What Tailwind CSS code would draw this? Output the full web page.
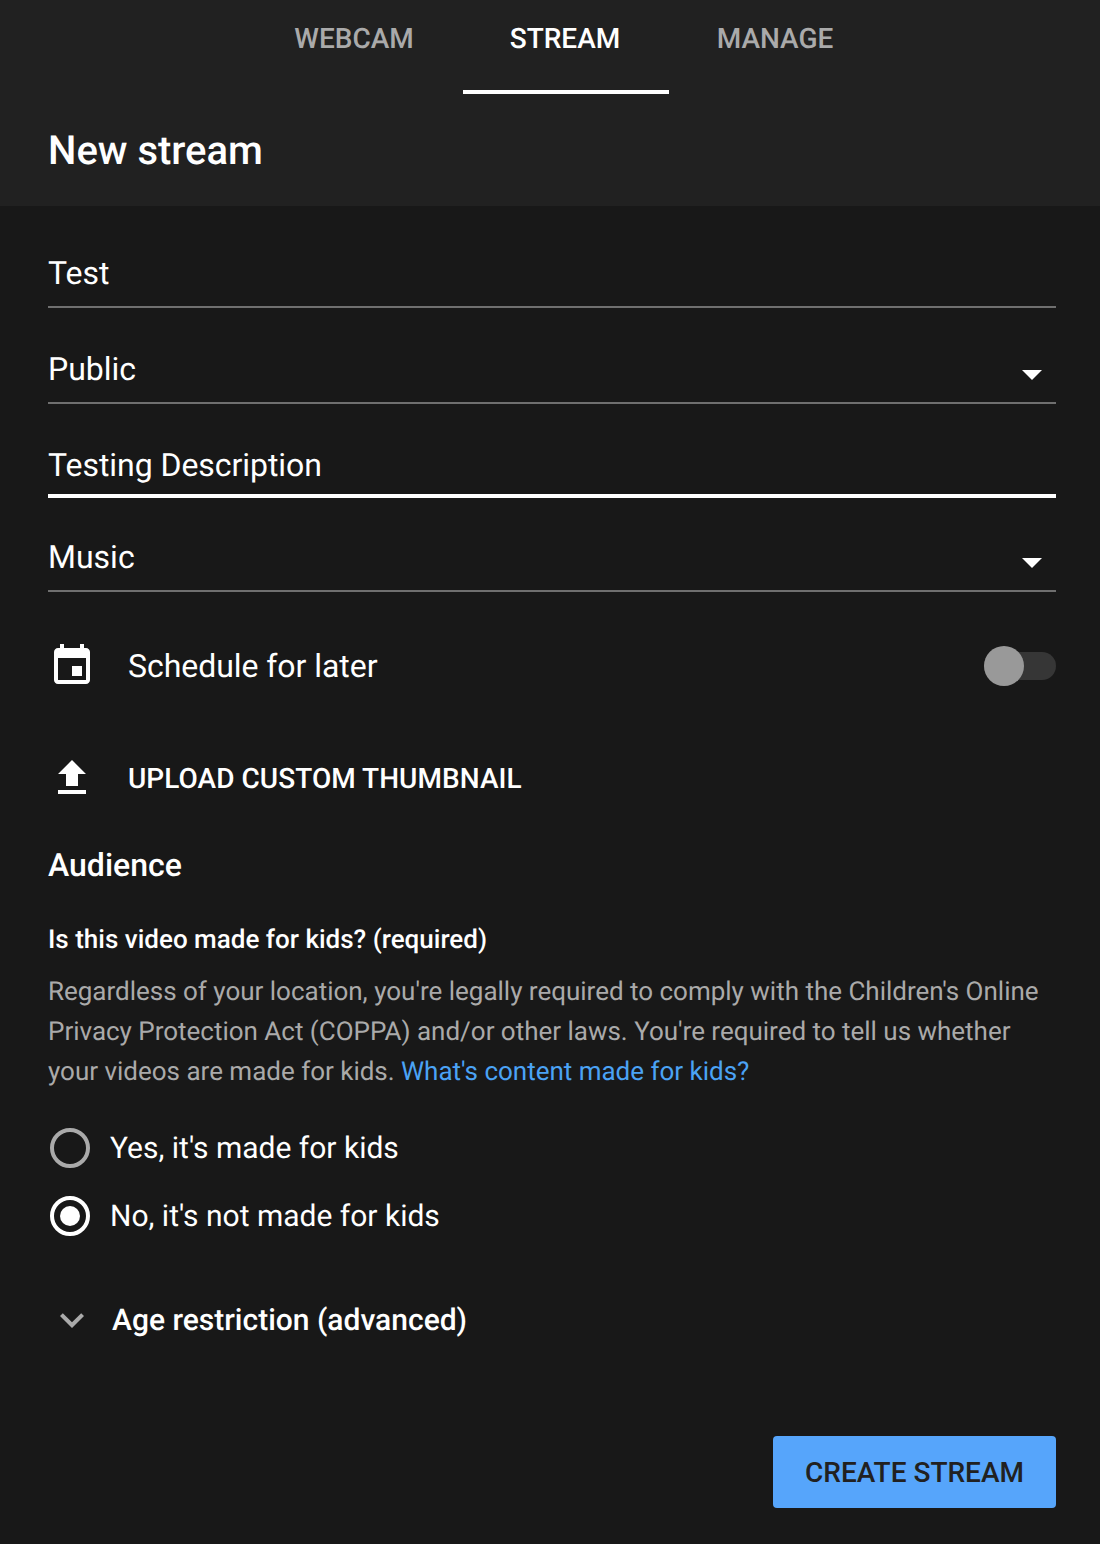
<!DOCTYPE html>
<html><head><meta charset="utf-8"><script src="https://cdn.jsdelivr.net/npm/@tailwindcss/browser@4"></script></head>
<body class="m-0 bg-[#181818]">
<div class="w-[1100px] h-[1544px] overflow-hidden bg-[#181818] text-white font-['Roboto',sans-serif] antialiased [text-rendering:geometricPrecision] flex flex-col">
  <header class="h-[206px] bg-[#212121] shrink-0">
    <nav class="flex h-[94px] pl-[247px] text-[28px] leading-[78px] font-medium">
      <div class="w-[214px] text-center text-[#aaaaaa]">WEBCAM</div>
      <div class="w-[206px] ml-[2px] pr-[2px] text-center border-b-4 border-white">STREAM</div>
      <div class="w-[212px] text-center text-[#aaaaaa]">MANAGE</div>
    </nav>
    <h1 class="pl-[48px] text-[40px] leading-[56px] font-medium h-[112px] pt-[29px] box-border">New stream</h1>
  </header>
  <main class="pl-[48px] pr-[44px] flex-1 flex flex-col">
    <div class="h-[102px] pt-[44px] box-border border-b-2 border-[#6f6f6f] text-[32px] leading-[46px]">Test</div>
    <div class="h-[96px] pt-[38px] box-border border-b-2 border-[#6f6f6f] text-[32px] leading-[46px] flex justify-between">
      <span>Public</span>
      <svg class="w-[20px] h-[10px] mt-[24px] mr-[14px]" viewBox="0 0 20 10"><path d="M0 0h20L10 10z" fill="#fff"/></svg>
    </div>
    <div class="h-[94px] pt-[38px] box-border border-b-4 border-white text-[32px] leading-[46px] tracking-[-0.05px]">Testing Description</div>
    <div class="h-[94px] pt-[36px] box-border border-b-2 border-[#6f6f6f] text-[32px] leading-[46px] flex justify-between">
      <span>Music</span>
      <svg class="w-[20px] h-[10px] mt-[24px] mr-[14px]" viewBox="0 0 20 10"><path d="M0 0h20L10 10z" fill="#fff"/></svg>
    </div>
    <div class="h-[148px] flex items-center justify-between">
      <div class="flex items-center">
        <svg class="w-[48px] h-[48px] mr-[32px]" viewBox="0 0 24 24"><path fill="#fff" d="M17 12h-5v5h5v-5zM16 1v2H8V1H6v2H5c-1.11 0-1.99.9-1.99 2L3 19c0 1.1.89 2 2 2h14c1.1 0 2-.9 2-2V5c0-1.1-.9-2-2-2h-1V1h-2zm3 18H5V8h14v11z"/></svg>
        <span class="text-[32px] leading-[46px] tracking-[-0.05px]">Schedule for later</span>
      </div>
      <div class="relative w-[72px] h-[28px] rounded-full bg-[#363636]">
        <div class="absolute left-0 top-[-6px] w-[40px] h-[40px] rounded-full bg-[#999999]"></div>
      </div>
    </div>
    <div class="h-[76px] flex items-center">
      <svg class="w-[48px] h-[48px] mr-[32px]" viewBox="0 0 24 24"><path fill="#fff" d="M9 16h6v-6h4l-7-7-7 7h4zm-4 2h14v2H5z"/></svg>
      <span class="text-[28px] leading-[40px] font-medium pt-[2px] tracking-[0.04px]">UPLOAD CUSTOM THUMBNAIL</span>
    </div>
    <h2 class="mt-[27px] text-[32px] leading-[44px] font-medium h-[44px]">Audience</h2>
    <h3 class="mt-[35px] text-[26px] leading-[36px] font-medium">Is this video made for kids? (required)</h3>
    <p class="mt-[14px] text-[26px] leading-[40px] text-[#aaaaaa] whitespace-nowrap tracking-[-0.012px]">Regardless of your location, you're legally required to comply with the Children's Online<br>Privacy Protection Act (COPPA) and/or other laws. You're required to tell us whether<br>your videos are made for kids. <span class="text-[#4ba3f5]">What's content made for kids?</span></p>
    <div class="mt-[32px] flex items-center h-[48px] pl-[2px]">
      <div class="w-[40px] h-[40px] rounded-full border-4 border-[#aaaaaa] box-border mr-[20px]"></div>
      <span class="text-[30px] leading-[42px] pt-[2px]">Yes, it's made for kids</span>
    </div>
    <div class="mt-[20px] flex items-center h-[48px] pl-[2px]">
      <div class="w-[40px] h-[40px] rounded-full border-4 border-white box-border mr-[20px] flex items-center justify-center"><div class="w-[20px] h-[20px] rounded-full bg-white"></div></div>
      <span class="text-[30px] leading-[42px] pt-[2px]">No, it's not made for kids</span>
    </div>
    <div class="mt-[56px] flex items-center h-[48px]">
      <svg class="w-[48px] h-[48px] mr-[16px]" viewBox="0 0 24 24"><path fill="#aaaaaa" d="M16.59 8.59 12 13.17 7.41 8.59 6 10l6 6 6-6z"/></svg>
      <span class="text-[30px] leading-[42px] font-medium pt-[2px]">Age restriction (advanced)</span>
    </div>
    <div class="mt-[92px] flex justify-end">
      <button class="w-[283px] h-[72px] pt-[2px] rounded-[4px] bg-[#56a5fb] text-[#212121] text-[28px] font-medium">CREATE STREAM</button>
    </div>
  </main>
</div>
</body></html>
